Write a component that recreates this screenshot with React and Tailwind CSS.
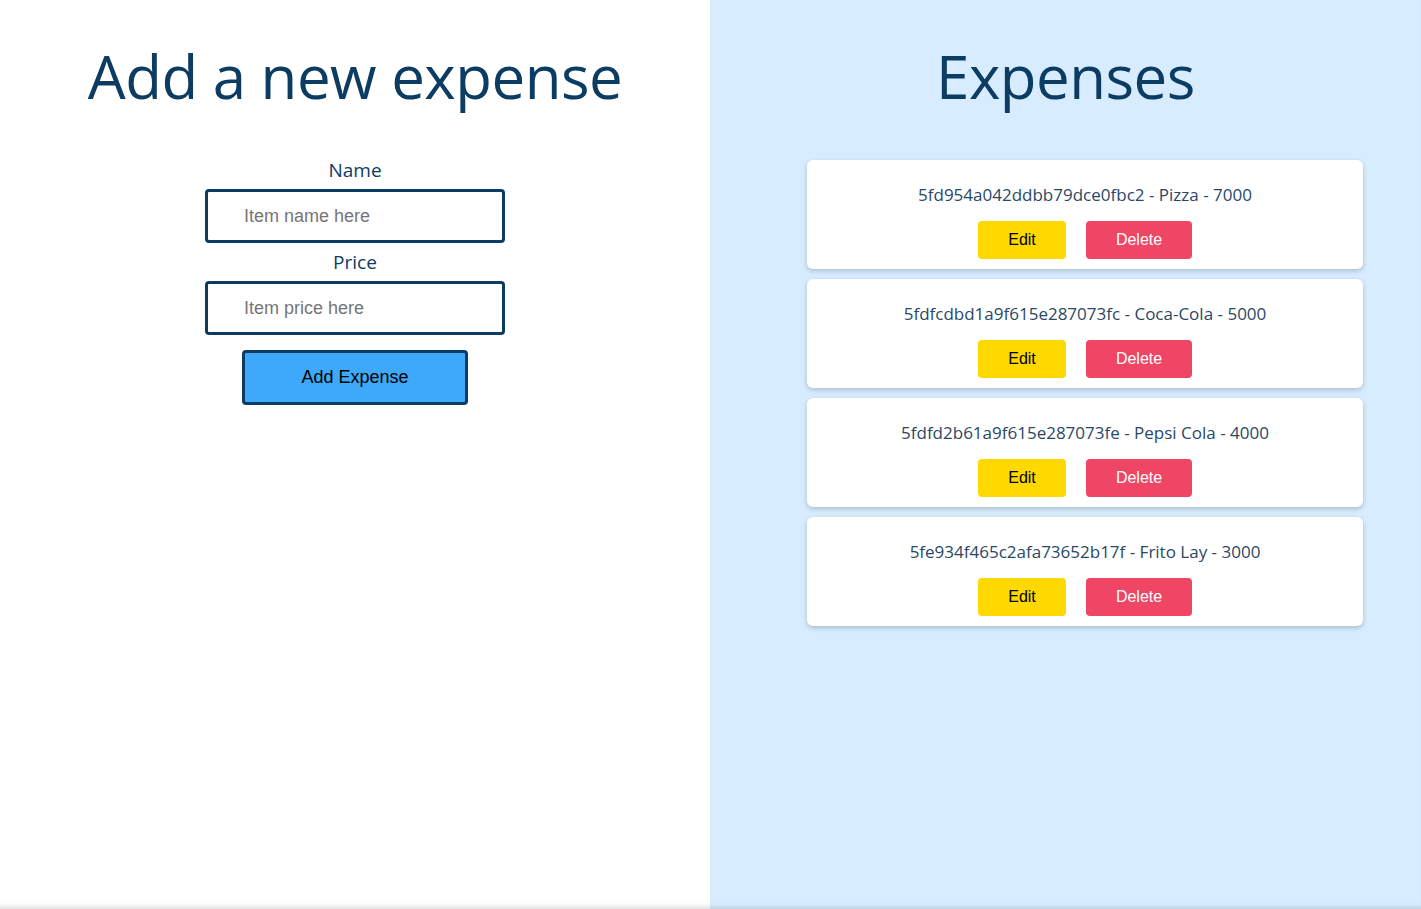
import React, { useState } from "react";

const initial = [
  { id: "5fd954a042ddbb79dce0fbc2", name: "Pizza", price: 7000 },
  { id: "5fdfcdbd1a9f615e287073fc", name: "Coca-Cola", price: 5000 },
  { id: "5fdfd2b61a9f615e287073fe", name: "Pepsi Cola", price: 4000 },
  { id: "5fe934f465c2afa73652b17f", name: "Frito Lay", price: 3000 },
];

const heading = { fontFamily: "'Open Sans', 'Noto Sans', sans-serif" };
const arial = { fontFamily: "'Liberation Sans', Arial, sans-serif" };

export default function App() {
  const [expenses, setExpenses] = useState(initial);
  const [name, setName] = useState("");
  const [price, setPrice] = useState("");

  const addExpense = () => {
    if (!name || !price) return;
    setExpenses([...expenses, { id: Date.now().toString(16), name, price: Number(price) }]);
    setName("");
    setPrice("");
  };

  return (
    <div className="flex min-h-[909px] text-[#0d3c63] shadow-[inset_0_-6px_5px_-4px_rgba(0,0,0,0.15)]" style={heading}>
      {/* linke Seite: Formular */}
      <div className="w-[710px] flex flex-col items-center">
        <h1 className="mt-[36px] text-[60px] leading-[80px] font-normal tracking-[-0.5px]">Add a new expense</h1>
        <label className="mt-[42px] text-[19px] leading-[24px]">Name</label>
        <input
          value={name}
          onChange={(e) => setName(e.target.value)}
          placeholder="Item name here"
          className="mt-[7px] w-[300px] h-[54px] border-[3px] border-[#0d3c63] rounded-[4px] pl-[36px] text-[18px] text-black placeholder:text-[#757575] outline-none bg-white"
          style={arial}
        />
        <label className="mt-[7px] text-[19px] leading-[24px]">Price</label>
        <input
          value={price}
          onChange={(e) => setPrice(e.target.value)}
          placeholder="Item price here"
          className="mt-[7px] w-[300px] h-[54px] border-[3px] border-[#0d3c63] rounded-[4px] pl-[36px] text-[18px] text-black placeholder:text-[#757575] outline-none bg-white"
          style={arial}
        />
        <button
          onClick={addExpense}
          className="mt-[15px] w-[226px] h-[55px] bg-[#3ea8fa] border-[3px] border-[#0d3c63] rounded-[4px] text-[18px] text-black"
          style={arial}
        >
          Add Expense
        </button>
      </div>

      {/* rechte Seite: Liste */}
      <div className="flex-1 bg-[#d7ecff] flex flex-col shadow-[inset_0_-6px_5px_-4px_rgba(0,0,0,0.12)]">
        <h1 className="mt-[36px] text-[60px] leading-[80px] font-normal text-center tracking-[-0.5px]">Expenses</h1>
        <div className="mt-[44px] ml-[97px] w-[556px] flex flex-col gap-[10px]">
          {expenses.map((e) => (
            <div key={e.id} className="bg-white rounded-[6px] shadow-[0_2px_5px_rgba(0,0,0,0.2)] h-[109px] flex flex-col items-center pt-[24px]">
              <p className="text-[17px] leading-[22px] text-[#2a4866]">
                {e.id} - {e.name} - {e.price}
              </p>
              <div className="mt-[15px] flex gap-[20px]" style={arial}>
                <button className="w-[88px] h-[38px] bg-[#ffd800] rounded-[4px] text-[16px] text-black">Edit</button>
                <button
                  onClick={() => setExpenses(expenses.filter((x) => x.id !== e.id))}
                  className="w-[106px] h-[38px] bg-[#ef4666] rounded-[4px] text-[16px] text-white"
                >
                  Delete
                </button>
              </div>
            </div>
          ))}
        </div>
      </div>
    </div>
  );
}
